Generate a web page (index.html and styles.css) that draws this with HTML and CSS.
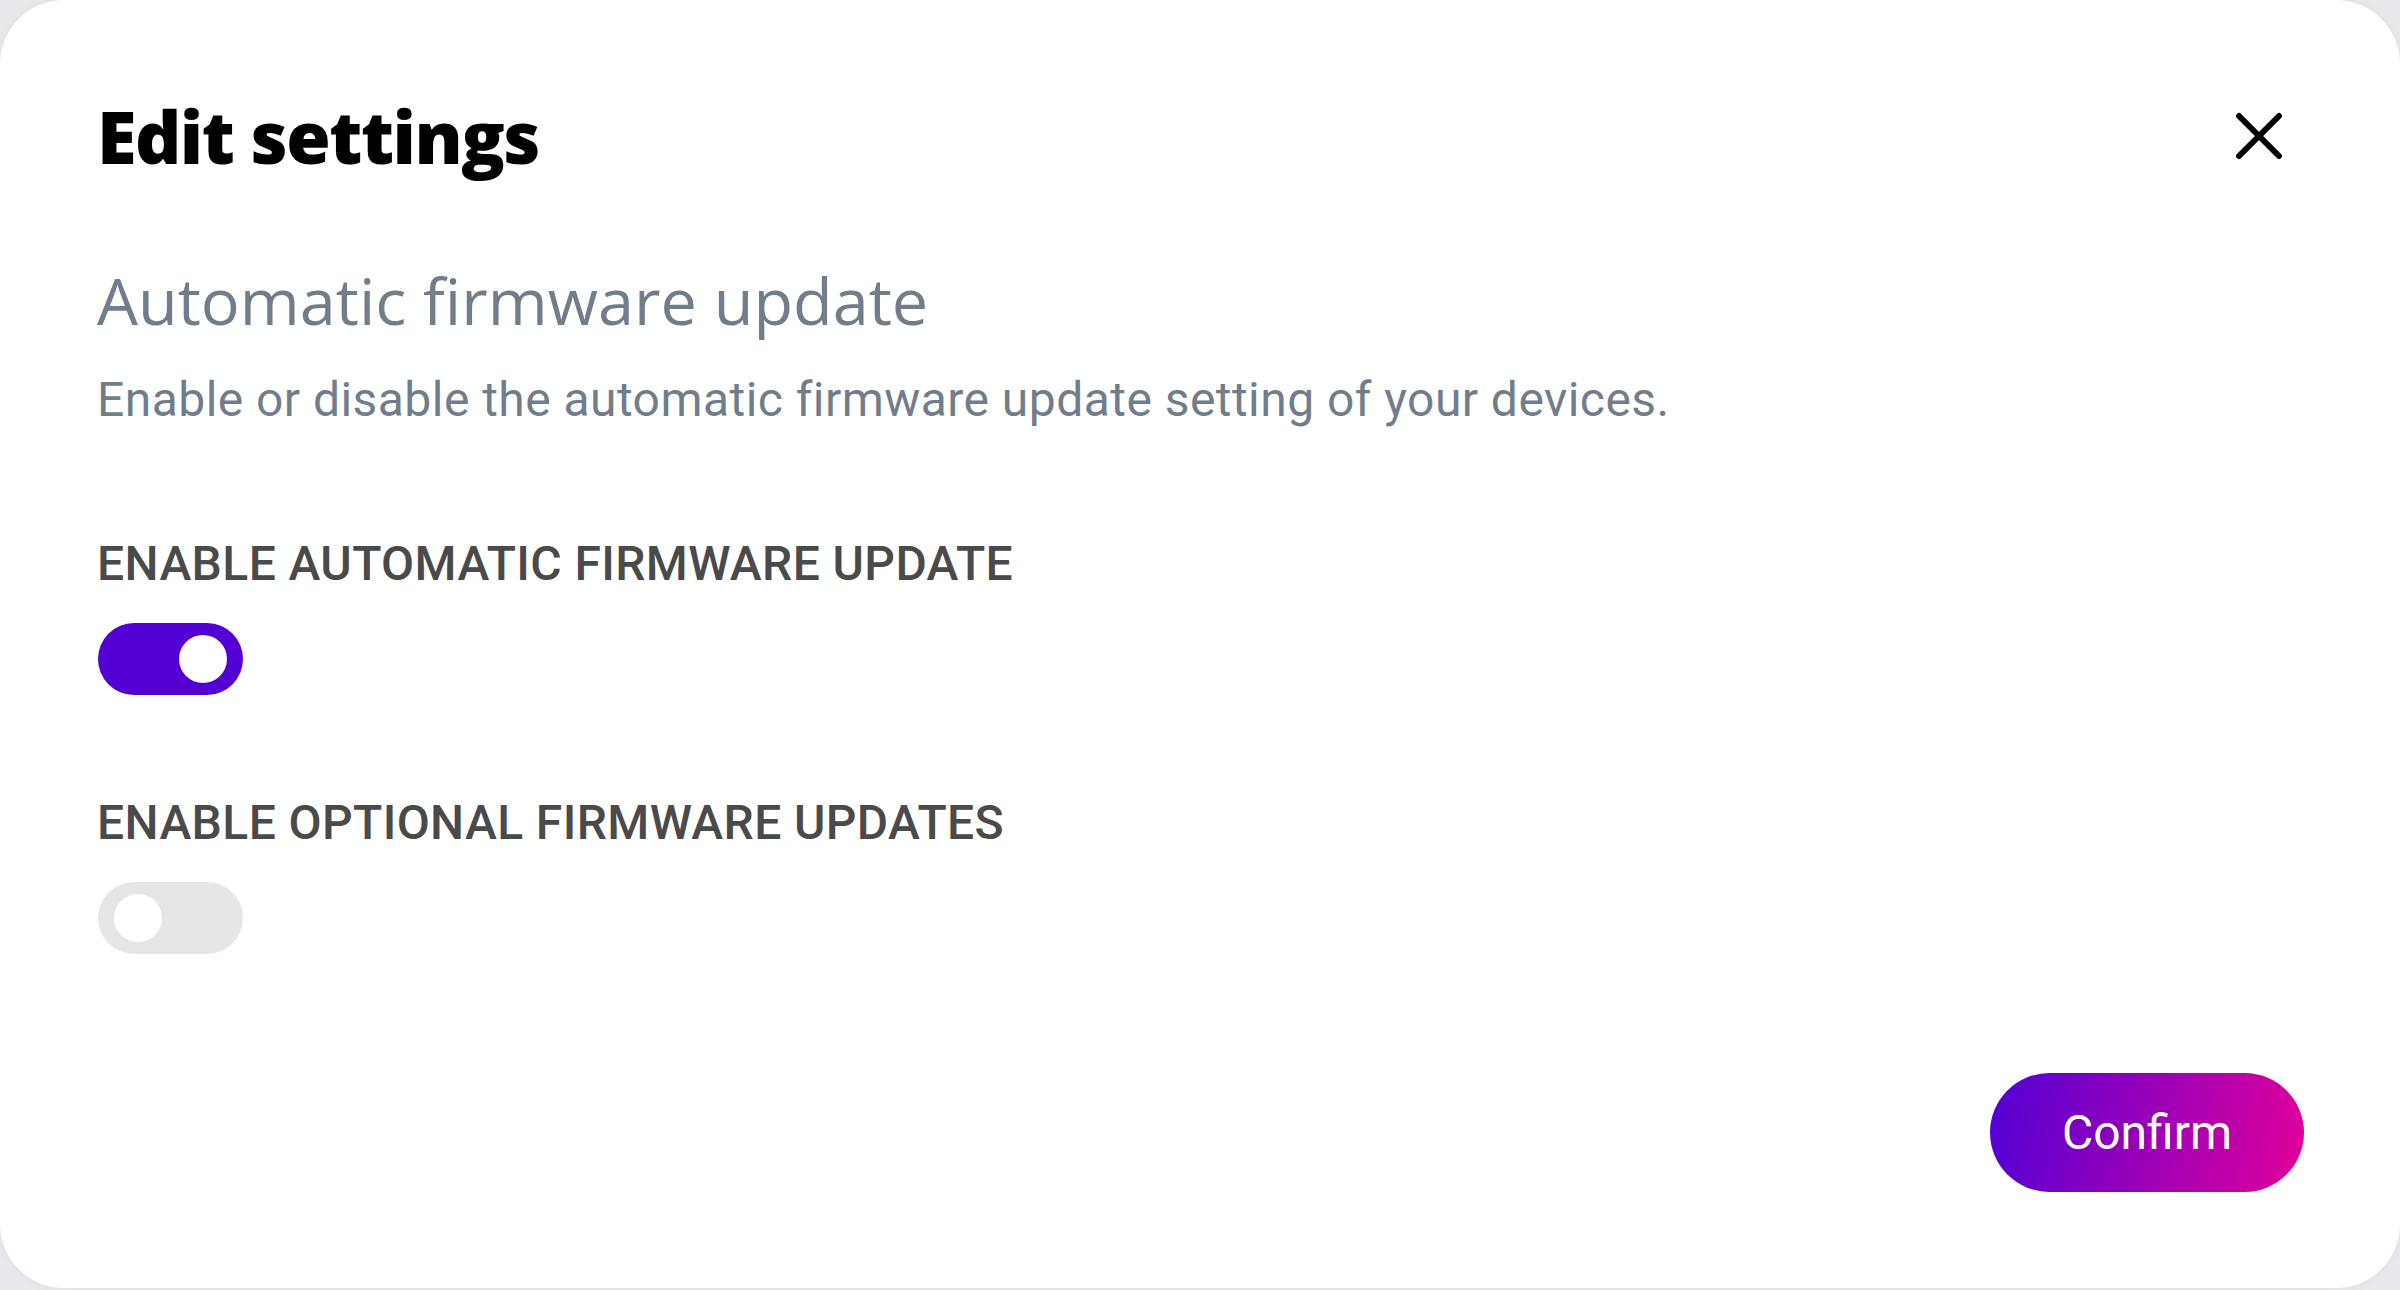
FILE: index.html
```html
<!DOCTYPE html>
<html lang="en">
<head>
<meta charset="utf-8">
<title>Edit settings</title>
<link rel="stylesheet" href="styles.css">
</head>
<body>
<div class="modal">
  <div class="modal-header">
    <h1 class="modal-title">Edit settings</h1>
    <button class="close-btn" aria-label="Close">
      <svg viewBox="0 0 48 48" width="48" height="48"><path d="M4 4 L44 44 M44 4 L4 44" stroke="#000" stroke-width="6" stroke-linecap="round" fill="none"/></svg>
    </button>
  </div>
  <h2 class="section-title">Automatic firmware update</h2>
  <p class="section-desc">Enable or disable the automatic firmware update setting of your devices.</p>
  <div class="setting">
    <div class="setting-label">ENABLE AUTOMATIC FIRMWARE UPDATE</div>
    <div class="toggle toggle-on"><span class="knob"></span></div>
  </div>
  <div class="setting setting-second">
    <div class="setting-label">ENABLE OPTIONAL FIRMWARE UPDATES</div>
    <div class="toggle"><span class="knob"></span></div>
  </div>
  <div class="modal-footer">
    <button class="confirm-btn">Confirm</button>
  </div>
</div>
</body>
</html>
```

FILE: styles.css
```css
* { box-sizing: border-box; }
html, body { margin: 0; padding: 0; }
body {
  background: #e6e8ec;
  width: 2400px;
  height: 1290px;
  overflow: hidden;
}
.modal {
  background: #fff;
  width: 2400px;
  height: 1288px;
  border-radius: 64px;
  padding: 100px 96px 96px 97px;
  display: flex;
  flex-direction: column;
  box-shadow: 0 0 12px rgba(0,0,0,0.04);
}
.modal-header {
  display: flex;
  align-items: center;
  justify-content: space-between;
  height: 72px;
}
.modal-title {
  margin: 0;
  font-family: "Open Sans", sans-serif;
  font-weight: 800;
  font-size: 72px;
  line-height: 1;
  color: #000;
  letter-spacing: -1.5px;
}
.close-btn {
  background: none;
  border: 0;
  padding: 0;
  margin-right: 21px;
  width: 48px;
  height: 48px;
  display: flex;
}
.section-title {
  margin: 96px 0 0;
  font-family: "Open Sans", sans-serif;
  font-weight: 400;
  font-size: 64.8px;
  line-height: 1;
  color: #717d8b;
}
.section-desc {
  margin: 43px 0 0;
  font-family: Roboto, sans-serif;
  font-weight: 400;
  font-size: 48px;
  line-height: 1;
  letter-spacing: 0.45px;
  color: #717d8b;
}
.setting { margin-top: 116px; }
.setting-second { margin-top: 104px; }
.setting-label {
  font-family: Roboto, sans-serif;
  font-weight: 500;
  font-size: 48px;
  line-height: 1;
  letter-spacing: 0.4px;
  color: #4a4a4a;
}
.toggle {
  margin-top: 35px;
  margin-left: 1px;
  width: 145px;
  height: 72px;
  border-radius: 36px;
  background: #e6e6e6;
  display: flex;
  align-items: center;
  padding: 0 16px;
}
.toggle-on {
  background: #5200d4;
  justify-content: flex-end;
}
.knob {
  width: 48px;
  height: 48px;
  border-radius: 50%;
  background: #fff;
}
.modal-footer {
  margin-top: auto;
  display: flex;
  justify-content: flex-end;
}
.confirm-btn {
  width: 314px;
  height: 119px;
  border: 0;
  border-radius: 60px;
  background: linear-gradient(100deg, #5000d6 0%, #9a00b8 50%, #e2009a 100%);
  color: #fff;
  font-family: Roboto, sans-serif;
  font-weight: 400;
  font-size: 48px;
  padding: 0;
}
```
